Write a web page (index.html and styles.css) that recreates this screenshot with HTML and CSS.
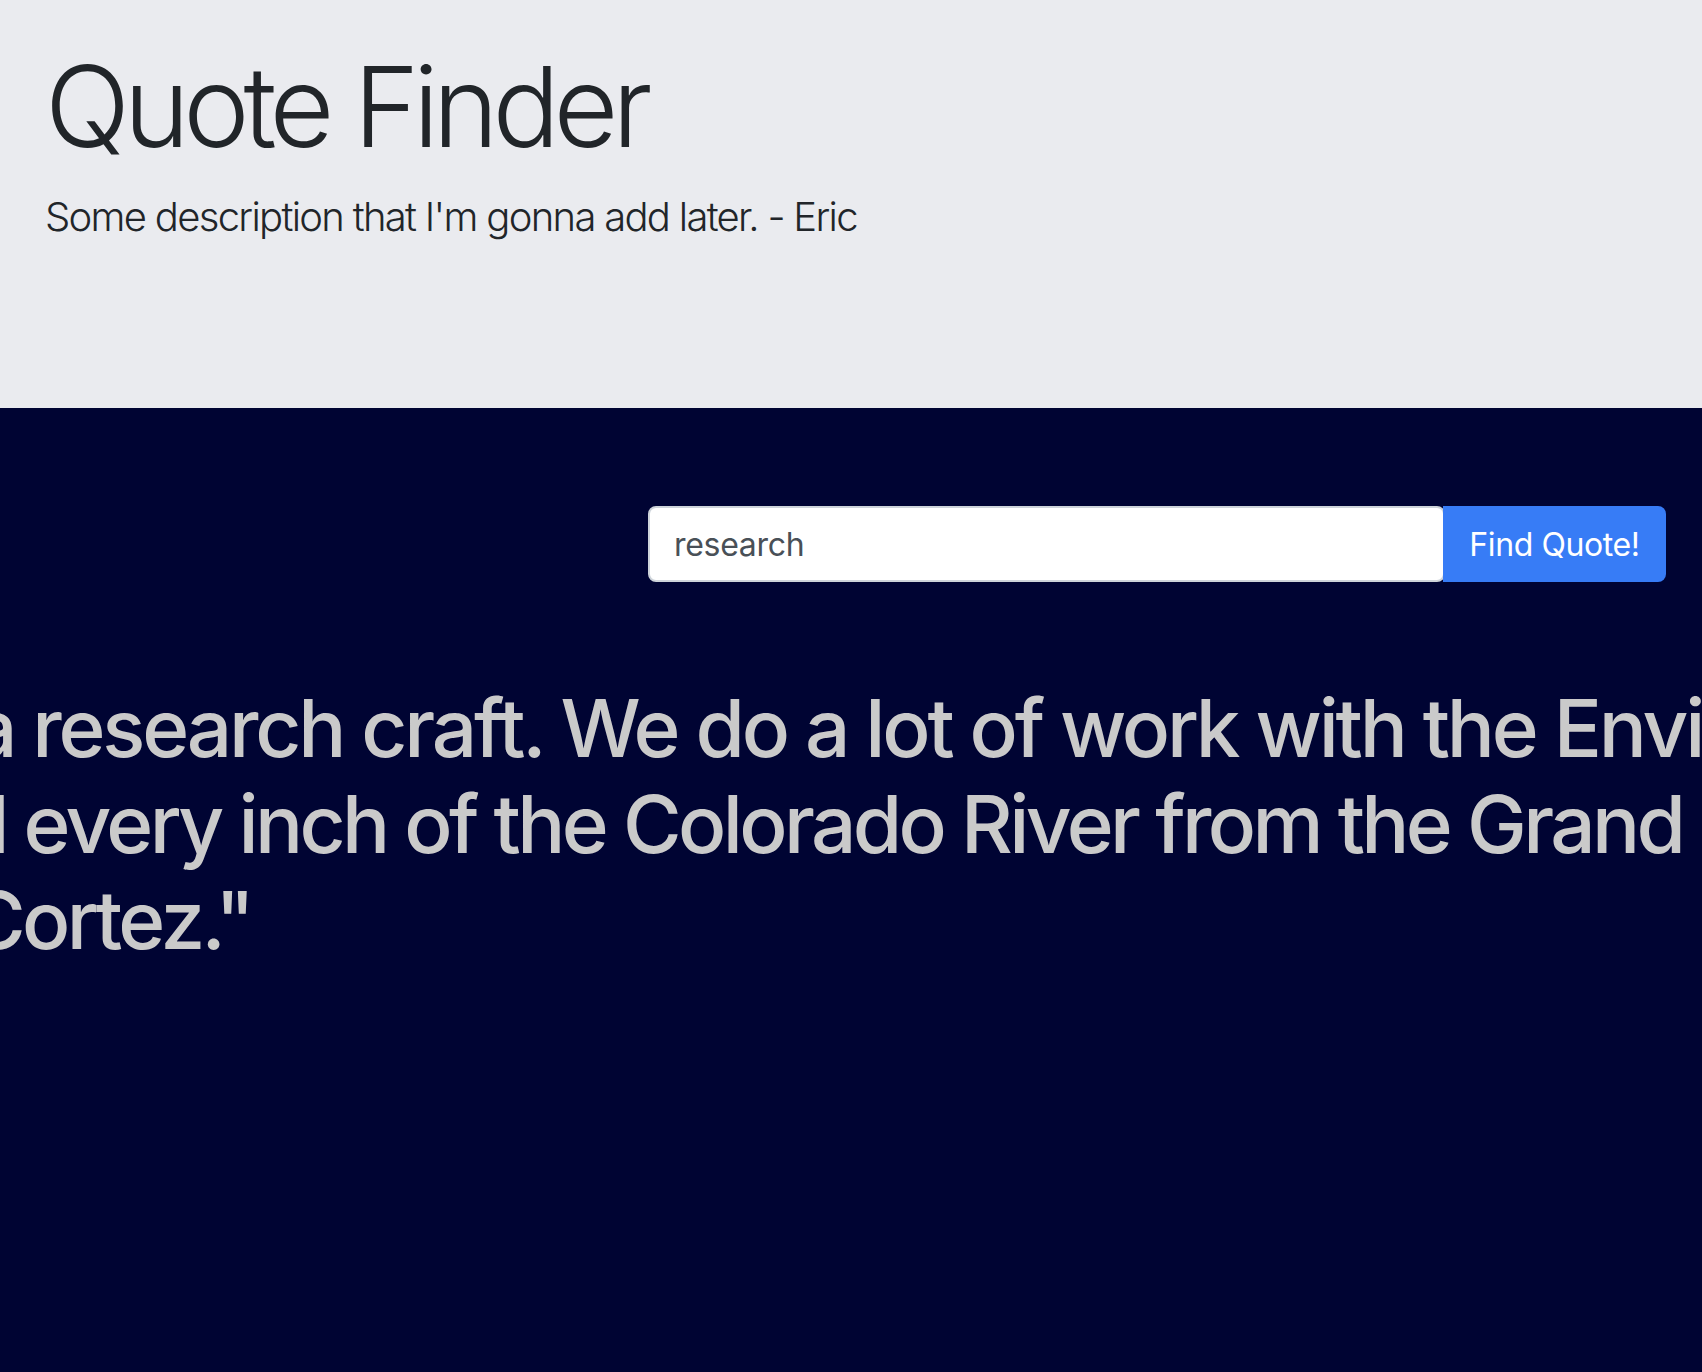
FILE: index.html
```html
<!DOCTYPE html>
<html lang="en">
<head>
<meta charset="utf-8">
<title>Quote Finder</title>
<link rel="stylesheet" href="styles.css">
</head>
<body>
  <header class="hero">
    <h1 class="hero-title">Quote Finder</h1>
    <p class="hero-lead">Some description that I'm gonna add later. - Eric</p>
  </header>
  <main class="results">
    <form class="search">
      <input class="search-input" type="text" value="research">
      <button class="search-btn" type="button">Find Quote!</button>
    </form>
    <h1 class="quote">
      <span class="qline l1"><span class="qpre">"We are&nbsp;</span>a research craft. We do a lot of work with the Environmental Protection</span>
      <span class="qline l2"><span class="qpre">Agency, an</span>d every inch of the Colorado River from the Grand Canyon to the</span>
      <span class="qline l3"><span class="qpre">Sea of&nbsp;</span>Cortez."</span>
    </h1>
  </main>
</body>
</html>
```
FILE: styles.css
```css
* { box-sizing: border-box; }
html, body { margin: 0; padding: 0; }
body {
  font-family: Inter, "Noto Sans", "Liberation Sans", sans-serif;
  background: #000433;
  color: #212529;
  overflow: hidden;
}
.hero {
  background: #eaebef;
  height: 408px;
  padding: 39px 36px 0 45px;
}
.hero-title {
  margin: 0 0 14px;
  font-size: 112px;
  font-weight: 300;
  line-height: 1.2;
  letter-spacing: -6.3px;
  color: #212529;
}
.hero-lead {
  margin: 0;
  font-size: 40px;
  font-weight: 300;
  line-height: 1.5;
  letter-spacing: -1.7px;
  color: #212529;
}
.results {
  height: 964px;
  overflow: hidden;
  padding: 98px 36px 0 0;
}
.search {
  display: flex;
  justify-content: flex-end;
  margin: 0 0 98px;
}
.search-input {
  width: 797px;
  height: 76px;
  border: 2px solid #ced4da;
  border-radius: 8px;
  background: #fff;
  padding: 0 24px;
  font-family: inherit;
  font-size: 32px;
  letter-spacing: -0.3px;
  color: #495057;
  outline: none;
}
.search-btn {
  width: 223px;
  height: 76px;
  margin-left: -2px;
  border: 0;
  border-radius: 0 8px 8px 0;
  background: #377cf6;
  color: #fff;
  font-family: inherit;
  font-size: 32px;
  font-weight: 400;
  letter-spacing: -0.4px;
  padding: 0 24px;
}
.quote {
  margin: 0;
  font-size: 80px;
  font-weight: 500;
  line-height: 96px;
  letter-spacing: -3.6px;
  color: #cacaca;
}
.qline {
  display: block;
  white-space: nowrap;
}
.qpre {
  display: inline-block;
  width: 900px;
  margin-left: -900px;
  text-align: right;
}
.l1 { margin-left: -28px; letter-spacing: -3.2px; }
.l2 { margin-left: -40px; }
.l3 { margin-left: -33px; }
```
